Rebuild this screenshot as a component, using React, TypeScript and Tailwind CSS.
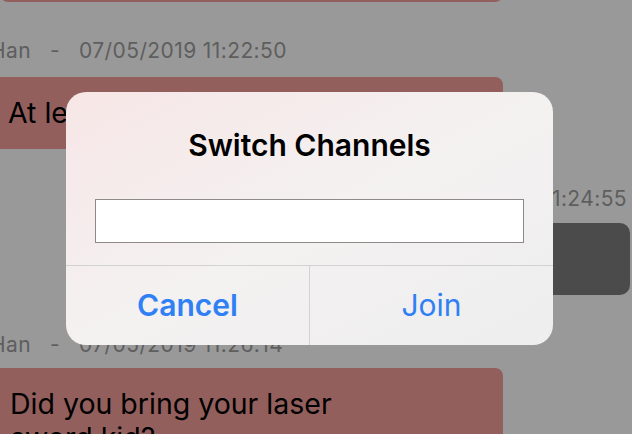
import React from "react";

const font = { fontFamily: "Inter, 'Noto Sans', sans-serif" };

function Label({ text, right }: { text: string[]; right?: boolean }) {
  return (
    <div
      className={`flex h-[24px] items-center text-[21px] leading-[24px] tracking-[0.4px] text-[#5e5e5e] ${right ? "justify-end pr-[5px]" : "-ml-[10px]"}`}
    >
      <span>{text[0]}</span>
      <span className="mx-[19px]">-</span>
      <span>{text[1]}</span>
    </div>
  );
}

export default function App() {
  return (
    <div className="relative h-[434px] w-[632px] overflow-hidden bg-[#999999]" style={font}>
      <div className="flex flex-col">
        <div className="-mt-[10px] h-[12px] w-[503px] rounded-b-[8px] bg-[#935f5d]" />
        <div className="mt-[37px]">
          <Label text={["Han", "07/05/2019 11:22:50"]} />
        </div>
        <div className="mt-[14px] h-[72px] w-[503px] rounded-r-[8px] bg-[#935f5d] px-[8px] pt-[19px] text-[28.5px] leading-[34px] text-black">
          At least we made it
        </div>
        <div className="mt-[38px]">
          <Label right text={["Luke", "07/05/2019 11:24:55"]} />
        </div>
        <div className="mt-[12px] flex justify-end pr-[2px]">
          <div className="h-[72px] w-[320px] rounded-[10px] bg-[#4b4b4b]" />
        </div>
        <div className="mt-[38px]">
          <Label text={["Han", "07/05/2019 11:26:14"]} />
        </div>
        <div className="mt-[11px] w-[503px] rounded-r-[8px] bg-[#935f5d] px-[10px] pt-[19px] pb-[16px] text-[28.5px] leading-[34px] text-black">
          <div className="w-[380px]">Did you bring your laser sword kid?</div>
        </div>
      </div>

      <div className="absolute left-[66px] top-[92px] flex h-[253px] w-[487px] flex-col overflow-hidden rounded-[20px] bg-gradient-to-br from-[#f7e6e6] via-[#f4f1f1] to-[#eeeeee]">
        <div className="mt-[35px] text-center text-[30px] font-semibold leading-[36px] text-black">
          Switch Channels
        </div>
        <div className="mx-[29px] mt-[36px] h-[44px] border border-[#8e8a8a] bg-white" />
        <div className="mt-[22px] flex h-[80px] border-t border-[#d2d2d2]">
          <div className="flex flex-1 items-center justify-center border-r border-[#d2d2d2] text-[30px] font-semibold text-[#2f80f5]">
            Cancel
          </div>
          <div className="flex flex-1 items-center justify-center text-[30px] text-[#2f80f5]">
            Join
          </div>
        </div>
      </div>
    </div>
  );
}
